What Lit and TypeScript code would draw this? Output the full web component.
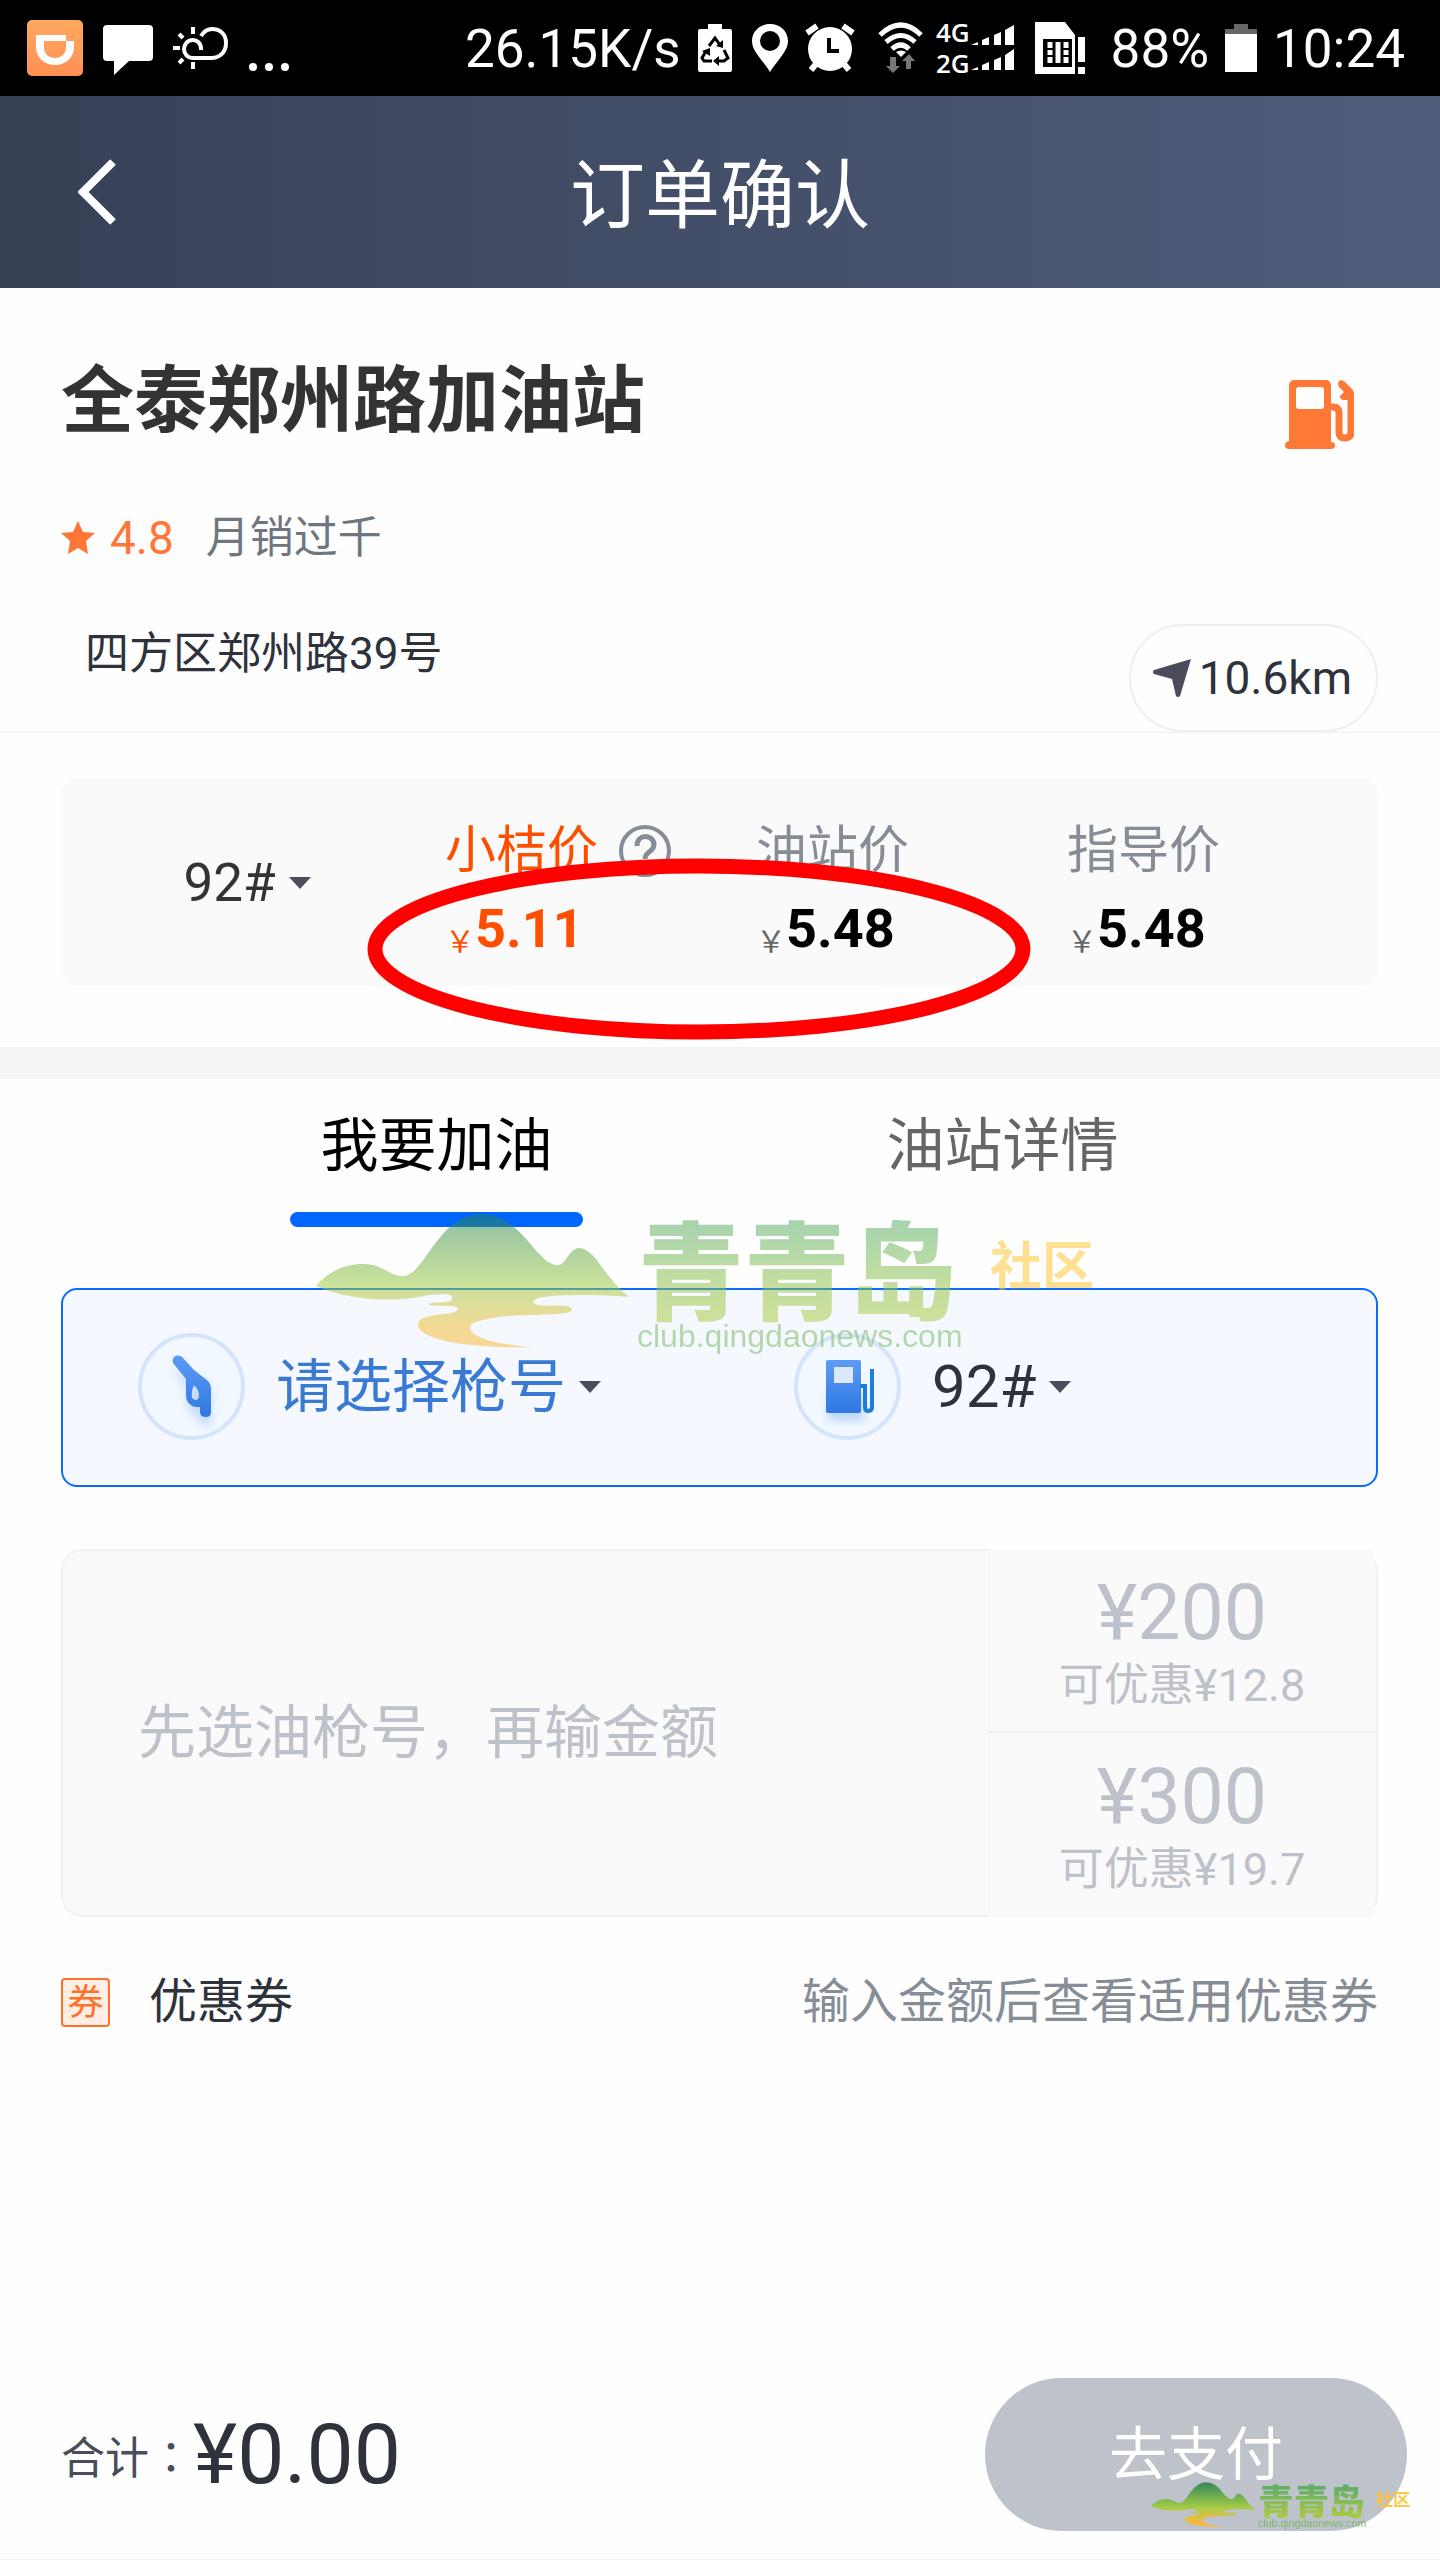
import { LitElement, html, css } from "lit";
import { customElement, property, state } from "lit/decorators.js";
import { classMap } from "lit/directives/class-map.js";

const textFonts = css`Roboto, "Noto Sans CJK SC", sans-serif`;

@customElement("status-bar")
class StatusBar extends LitElement {
  static styles = css`
    :host {
      display: flex;
      justify-content: space-between;
      align-items: center;
      height: 96px;
      padding: 0 35px 0 27px;
      background: #000;
      color: #fff;
      font: 400 53px/64px ${textFonts};
    }
    .group {
      display: flex;
      align-items: center;
      gap: 16px;
      white-space: nowrap;
    }
    .notices {
      gap: 20px;
    }
    span {
      padding-top: 2px;
    }
    svg {
      display: block;
      flex: none;
      overflow: visible;
    }
  `;

  render() {
    return html`
      <div class="group notices">
        <svg width="56" height="56" viewBox="0 0 56 56" aria-hidden="true">
          <defs>
            <linearGradient id="app" x1="0" y1="0" x2="0" y2="1">
              <stop offset="0" stop-color="#ffa95f" />
              <stop offset="1" stop-color="#ff8f54" />
            </linearGradient>
          </defs>
          <rect width="56" height="56" rx="5" fill="url(#app)" />
          <path
            fill="#fff"
            fill-rule="evenodd"
            d="M9 15H39V21H47V27C47 38 38 45 28 45S9 38 9 27ZM17 21V27C17 34 22 38 28 38S39 34 39 27V21Z"
          />
        </svg>
        <svg width="50" height="56" viewBox="0 0 50 56" aria-hidden="true">
          <path fill="#fff" d="M4 5H46Q50 5 50 9V37Q50 41 46 41H26L11 55V41H4Q0 41 0 37V9Q0 5 4 5Z" />
        </svg>
        <svg width="56" height="56" viewBox="0 0 56 56" fill="none" stroke="#fff" stroke-width="4" aria-hidden="true">
          <path d="M28 30V29C28 23 24 20 20 20C14 20 11 25 11 29C11 34 15 38 19 38H38C47 38 53 32 53 23C53 14 47 9 39 9C34 9 31 11 28 16" />
          <path d="M20 7V14M20 42V49M0 28H7M6 14L10 18M6 43L10 39" />
        </svg>
        <svg width="42" height="56" viewBox="0 0 42 56" fill="#fff" aria-hidden="true">
          <circle cx="4" cy="47" r="4" /><circle cx="20" cy="47" r="4" /><circle cx="36" cy="47" r="4" />
        </svg>
      </div>
      <div class="group">
        <span>26.15K/s</span>
        <svg width="36" height="48" viewBox="0 0 36 48" aria-hidden="true">
          <path fill="#fff" d="M11 0H25V5H33Q35 5 35 7V46Q35 48 33 48H3Q1 48 1 46V7Q1 5 3 5H11Z" />
          <g fill="none" stroke="#000" stroke-width="3">
            <path d="M12 22L18 14L23 21" /><path d="M27 26L31 34L27 37H20" /><path d="M15 37H7L5 34L9 27" />
          </g>
          <path d="M26 16V24L19 22ZM22 32V42L16 37ZM5 27L13 24V32Z" />
        </svg>
        <svg width="40" height="48" viewBox="0 0 40 48" aria-hidden="true">
          <path
            fill="#fff"
            fill-rule="evenodd"
            d="M21 0C31 0 39 7 39 17C39 27 30 34 21 48C12 34 3 27 3 17C3 7 11 0 21 0ZM21 7A10 10 0 1 0 21 27A10 10 0 1 0 21 7Z"
          />
        </svg>
        <svg width="50" height="48" viewBox="0 0 50 48" aria-hidden="true">
          <circle cx="25" cy="25" r="22" fill="#fff" />
          <path stroke="#fff" stroke-width="6" d="M2 9L12 2M38 2L48 9M11 40L6 46M39 40L44 46" />
          <path fill="none" stroke="#000" stroke-width="4" d="M24 14V27H34" />
        </svg>
        <svg width="50" height="50" viewBox="0 0 50 50" aria-hidden="true">
          <g fill="none" stroke="#fff" stroke-width="5">
            <path d="M9 12Q30 -8 50 12" /><path d="M15 19Q30 6 44 19" /><path d="M21 26Q30 18 38 26" />
          </g>
          <path fill="#fff" d="M25 29Q30 26 35 29L30 34Z" />
          <path fill="#777" d="M19 34H25V43H29L22 50L15 43H19ZM35 46V38H31L38 31L44 38H40V46Z" />
        </svg>
        <svg width="80" height="52" viewBox="0 0 80 52" fill="#fff" aria-hidden="true">
          <g font-family="Open Sans" font-size="26" font-weight="600">
            <text x="-1" y="20">4G</text>
            <text x="-1" y="51">2G</text>
          </g>
          <path d="M34 23L41 20V23ZM45 23V18L52 15V23ZM57 23V13L64 10V23ZM68 23V8L77 3V23Z" />
          <path d="M34 48L41 45V48ZM45 48V43L52 40V48ZM57 48V38L64 35V48ZM68 48V33L77 27V48Z" />
        </svg>
        <svg width="62" height="52" viewBox="0 0 62 52" aria-hidden="true">
          <path fill="#fff" fill-rule="evenodd" d="M2 0H32L42 13V52H2ZM10 17V45H39V17Z" />
          <path fill="none" stroke="#fff" stroke-width="5" d="M17 20V41M25 20V41M33 20V41" />
          <path stroke="#000" stroke-width="2" d="M13 27H21M13 34H21M29 27H36M29 34H36" />
          <path fill="#fff" d="M45 15H52V40H45ZM45 45H52V52H45Z" />
        </svg>
        <span>88%</span>
        <svg width="32" height="48" viewBox="0 0 32 48" aria-hidden="true">
          <path fill="#666" d="M9 0H23V5H32V10H0V5H9Z" />
          <path fill="#fff" d="M0 10H32V48H0Z" />
        </svg>
        <span>10:24</span>
      </div>
    `;
  }
}

@customElement("community-mark")
class CommunityMark extends LitElement {
  static styles = css`
    :host {
      display: block;
      pointer-events: none;
    }
    svg {
      display: block;
      width: 100%;
      overflow: visible;
    }
    .name {
      font: 900 106px "Noto Sans CJK SC", sans-serif;
    }
    .suffix {
      font: 700 52px "Noto Sans CJK SC", sans-serif;
    }
    .site {
      font: 400 32px "Liberation Sans", sans-serif;
    }
  `;

  render() {
    return html`
      <svg viewBox="0 0 780 142" role="img" aria-label="青青岛社区">
        <defs>
          <linearGradient id="hill" x1="0" y1="0" x2="0" y2="1">
            <stop offset="0" stop-color="#23824f" />
            <stop offset="0.55" stop-color="#9dcb38" />
            <stop offset="0.68" stop-color="#c6c63a" />
            <stop offset="0.85" stop-color="#f3bb2c" />
            <stop offset="1" stop-color="#f8ba30" />
          </linearGradient>
          <linearGradient id="ink" x1="0" y1="0" x2="0" y2="1">
            <stop offset="0.2" stop-color="#4fa962" />
            <stop offset="0.8" stop-color="#a2ca38" />
          </linearGradient>
        </defs>
        <path
          fill="url(#hill)"
          d="M0 73C12 58 30 51 47 51C68 51 74 64 88 63C110 60 122 2 165 1C206 2 218 48 240 52C250 54 252 36 263 35C280 36 286 62 313 84C276 81 242 82 228 84C215 86 215 90 222 92C234 94 256 90 256 97C254 104 200 100 177 105C160 108 154 110 154 115C156 126 186 132 217 134C150 136 104 126 102 113C100 98 142 104 142 96C142 90 113 95 113 91C116 88 136 91 136 86C136 82 136 80 113 82C80 90 34 88 0 73Z"
        />
        <text class="name" x="322" y="98" fill="url(#ink)">青青岛</text>
        <text class="suffix" x="674" y="72" fill="#ffc32b">社区</text>
        <text class="site" x="321" y="134" fill="#73b85a">club.qingdaonews.com</text>
      </svg>
    `;
  }
}

interface Price {
  label: string;
  value: string;
  own?: boolean;
}

interface Preset {
  amount: string;
  saving: string;
}

@customElement("drop-down")
class DropDown extends LitElement {
  @property() label = "";
  @property() value = "";

  static styles = css`
    :host {
      display: inline-flex;
    }
    .field {
      display: flex;
      align-items: center;
      gap: 12px;
    }
    select {
      appearance: none;
      border: 0;
      margin: 0;
      padding: 0;
      background: none;
      color: inherit;
      font: inherit;
    }
    svg {
      display: block;
    }
  `;

  render() {
    return html`
      <label class="field">
        <select aria-label=${this.label}>
          <option>${this.value}</option>
        </select>
        <svg width="22" height="12" viewBox="0 0 22 12" aria-hidden="true">
          <path fill="#4c4d5c" d="M0 0H22L11 12Z" />
        </svg>
      </label>
    `;
  }
}

@customElement("app-root")
class AppRoot extends LitElement {
  @state() private tab = 0;

  private tabs = ["我要加油", "油站详情"];
  private prices: Price[] = [
    { label: "小桔价", value: "5.11", own: true },
    { label: "油站价", value: "5.48" },
    { label: "指导价", value: "5.48" },
  ];
  private presets: Preset[] = [
    { amount: "¥200", saving: "可优惠¥12.8" },
    { amount: "¥300", saving: "可优惠¥19.7" },
  ];

  static styles = css`
    :host {
      display: flex;
      flex-direction: column;
      min-height: 100vh;
      background: #fefefe;
      color: #2e323b;
      font: 400 44px/60px ${textFonts};
    }
    * {
      box-sizing: border-box;
    }
    button {
      border: 0;
      margin: 0;
      padding: 0;
      background: none;
      color: inherit;
      font: inherit;
    }
    h1,
    h2,
    p {
      margin: 0;
    }
    svg {
      display: block;
      flex: none;
    }
    .header {
      display: grid;
      grid-template-columns: 120px 1fr 120px;
      align-items: center;
      height: 192px;
      background: linear-gradient(90deg, #384056, #4f5d7b);
      color: #fff;
    }
    .back {
      display: flex;
      justify-content: flex-end;
    }
    .title {
      padding-top: 8px;
      text-align: center;
      font: 400 75px/96px ${textFonts};
    }
    .station {
      padding: 64px 62px 0 61px;
      border-bottom: 1px solid #f1f1f3;
    }
    .station-head {
      display: flex;
      justify-content: space-between;
      height: 97px;
      padding-right: 24px;
    }
    .station-name {
      font: 700 73px/98px ${textFonts};
      color: #333;
    }
    .station-icon {
      align-self: flex-end;
    }
    .rating {
      display: flex;
      align-items: center;
      margin-top: 56px;
      line-height: 66px;
      color: #6f7680;
    }
    .score {
      margin: 0 32px 0 15px;
      font-size: 46px;
      color: #ff7637;
    }
    .place {
      display: flex;
      justify-content: space-between;
      margin-top: 53px;
      padding-left: 24px;
    }
    .distance {
      display: flex;
      align-items: center;
      gap: 8px;
      height: 108px;
      padding: 0 24px 0 22px;
      border: 2px solid #eeeef3;
      border-radius: 54px;
      font-size: 46px;
    }
    .pricing {
      padding: 46px 62px 61px 61px;
      border-bottom: 32px solid #f5f5f5;
    }
    .price-card {
      position: relative;
      display: grid;
      grid-template-columns: 384px repeat(3, 1fr);
      align-items: center;
      padding: 30px 0;
      border-radius: 16px;
      background: #fafafa;
    }
    .grade {
      justify-self: center;
      padding-right: 12px;
      font: 400 53px/64px ${textFonts};
      color: #333;
    }
    .price {
      padding-top: 11px;
    }
    .price-label {
      display: flex;
      align-items: center;
      gap: 20px;
      font-size: 51px;
      line-height: 62px;
      color: #868d97;
    }
    .price-value {
      display: flex;
      align-items: flex-end;
      height: 74px;
      color: #000;
      font: 700 54px/54px ${textFonts};
    }
    .currency {
      font: 400 30px/34px "Noto Sans CJK SC", sans-serif;
      color: #666;
    }
    .own,
    .own .currency {
      color: #ff4e00;
    }
    .circled {
      position: absolute;
      left: 306px;
      top: 79px;
    }
    .order {
      position: relative;
      padding: 0 62px 0 61px;
    }
    .tabs {
      display: flex;
      justify-content: center;
    }
    .tab {
      display: flex;
      flex-direction: column;
      align-items: center;
      gap: 34px;
      width: 566px;
      padding-top: 35px;
      font: 400 58px/64px ${textFonts};
      color: #666;
    }
    .tab::after {
      content: "";
      width: 293px;
      height: 15px;
      border-radius: 8px;
    }
    .tab.active {
      color: #000;
    }
    .tab.active::after {
      background: #0066ff;
    }
    .watermark {
      position: absolute;
      left: 316px;
      top: 134px;
      width: 780px;
      opacity: 0.5;
    }
    .pump-card {
      display: grid;
      grid-template-columns: 656px 1fr;
      align-items: center;
      height: 199px;
      margin-top: 61px;
      padding: 0 75px 2px;
      border: 2px solid #0a6cff;
      border-radius: 16px;
      background: #f5f8ff;
      font-size: 60px;
      line-height: 64px;
    }
    .pick {
      display: flex;
      align-items: center;
      gap: 31px;
    }
    .gun {
      color: #3a7ad2;
      font-size: 58px;
    }
    .amount-card {
      display: grid;
      grid-template-columns: 1fr 385px;
      margin-top: 62px;
      padding-right: 2px;
      border: 2px solid #f0f0f5;
      border-radius: 22px;
      background: #fafafa;
      color: #bdc1ca;
    }
    .amount {
      width: 100%;
      border: 0;
      padding: 0 0 0 75px;
      background: none;
      font: 400 58px/64px ${textFonts};
    }
    .amount::placeholder {
      color: #bdc1ca;
      opacity: 1;
    }
    .presets {
      display: grid;
      margin: -2px 0;
      border-left: 1px solid #f0f0f5;
      background: #fafafa;
    }
    .preset {
      display: flex;
      flex-direction: column;
      align-items: center;
      height: 184px;
      padding-top: 24px;
      font-size: 45px;
      line-height: 66px;
    }
    .preset:first-child {
      border-bottom: 2px solid #f0f0f5;
    }
    .preset-amount {
      font-size: 77px;
      line-height: 80px;
    }
    .coupon {
      display: flex;
      align-items: center;
      margin-top: 53px;
      font-size: 48px;
      line-height: 64px;
    }
    .coupon-badge {
      width: 49px;
      height: 49px;
      margin-right: 39px;
      border: 2px solid #ff7128;
      border-radius: 4px;
      background: #ffeee6;
      color: #ff7128;
      font-size: 36px;
      line-height: 47px;
      text-align: center;
    }
    .coupon-hint {
      margin-left: auto;
      color: #868d97;
    }
    .footer {
      position: relative;
      display: flex;
      align-items: center;
      margin-top: auto;
      padding: 0 33px 28px 61px;
      border-bottom: 1px solid #f1f1f3;
    }
    .total-label {
      color: #484e5b;
      font-family: "Noto Sans CJK TC", sans-serif;
    }
    .total {
      font-size: 84px;
      line-height: 96px;
    }
    .pay {
      width: 422px;
      height: 153px;
      margin-left: auto;
      border-radius: 77px;
      background: #bec2cb;
      color: #fff;
      font-size: 58px;
    }
    .stamp {
      position: absolute;
      right: 29px;
      bottom: 30px;
      width: 260px;
      opacity: 0.9;
    }
  `;

  private gunIcon() {
    return html`<svg width="107" height="107" viewBox="0 0 107 107" aria-hidden="true">
      <defs>
        <linearGradient id="gun" x1="0" y1="0" x2="0" y2="1">
          <stop offset="0" stop-color="#5d9cf4" />
          <stop offset="1" stop-color="#2f77e2" />
        </linearGradient>
        <filter id="soft" x="-50%" y="-50%" width="200%" height="200%"><feGaussianBlur stdDeviation="4" /></filter>
      </defs>
      <circle cx="53.5" cy="53.5" r="51.5" fill="#f1f8ff" stroke="#d4e5fb" stroke-width="4" />
      <path fill="#a9c9f5" opacity="0.6" filter="url(#soft)" d="M36 34L48 56L50 76L68 94L74 90L72 52Z" />
      <path
        fill="url(#gun)"
        fill-rule="evenodd"
        d="M35 30C33 22 42 20 46 26L56 37L70 48Q73 51 73 55V79Q73 84 68 84Q62 84 62 79V74H58Q48 72 48 62V46ZM56 52Q53 58 54 65L57 67Q61 67 61 62Q61 57 56 52Z"
      />
    </svg>`;
  }

  private pumpIcon() {
    return html`<svg width="107" height="107" viewBox="0 0 107 107" aria-hidden="true">
      <defs>
        <linearGradient id="pump" x1="0" y1="0" x2="0" y2="1">
          <stop offset="0" stop-color="#5d9cf4" />
          <stop offset="1" stop-color="#2f77e2" />
        </linearGradient>
        <filter id="haze" x="-50%" y="-50%" width="200%" height="200%"><feGaussianBlur stdDeviation="4" /></filter>
      </defs>
      <circle cx="53.5" cy="53.5" r="51.5" fill="#f1f8ff" stroke="#d4e5fb" stroke-width="4" />
      <rect x="34" y="60" width="36" height="28" fill="#a9c9f5" opacity="0.7" filter="url(#haze)" />
      <rect x="32" y="27" width="35" height="53" rx="2" fill="url(#pump)" />
      <rect x="40" y="34" width="19" height="16" fill="#dbe8fb" />
      <path fill="none" stroke="#1c80da" stroke-width="4" d="M66 53H71V74Q71 78 74 78Q78 78 78 74V36" />
    </svg>`;
  }

  render() {
    return html`
      <status-bar></status-bar>
      <header class="header">
        <button class="back" aria-label="返回">
          <svg width="42" height="68" viewBox="0 0 42 68" fill="none" stroke="#fff" stroke-width="8">
            <path d="M35 4L5 34L35 64" />
          </svg>
        </button>
        <h1 class="title">订单确认</h1>
      </header>

      <section class="station">
        <div class="station-head">
          <h2 class="station-name">全泰郑州路加油站</h2>
          <svg class="station-icon" width="69" height="69" viewBox="0 0 69 69" aria-hidden="true">
            <path
              fill="#ff7835"
              fill-rule="evenodd"
              d="M9 0H41Q45 0 46 5V62Q50 62 50 65Q50 69 46 69H4Q0 69 0 65Q0 62 4 61V5Q5 0 9 0ZM14 7Q11 7 11 10V26Q11 29 14 29H36Q39 29 39 26V10Q39 7 36 7Z"
            />
            <path fill="none" stroke="#ff7835" stroke-width="7" d="M44 27H48Q54 27 54 33V52Q54 58 60 58Q66 58 66 52V14" />
            <path fill="#ff7835" d="M53 4C53 0 57 -1 60 2L67 9Q69 11 69 14V20H58Q55 19 55 16L59 12L54 7Z" />
          </svg>
        </div>
        <div class="rating">
          <svg width="34" height="34" viewBox="0 0 34 34" aria-hidden="true">
            <path fill="#ff7637" d="M17 0L22 11L34 12L25 20L27 33L17 27L7 33L9 20L0 12L12 11Z" />
          </svg>
          <span class="score">4.8</span>
          <span>月销过千</span>
        </div>
        <div class="place">
          <p>四方区郑州路39号</p>
          <button class="distance">
            <svg width="38" height="38" viewBox="0 0 38 38" aria-hidden="true">
              <path fill="#4a4b5b" d="M38 0L27 37Q25 39 23 37L19 20L1 15Q-1 13 1 11Z" />
            </svg>
            10.6km
          </button>
        </div>
      </section>

      <section class="pricing">
        <div class="price-card">
          <drop-down class="grade" label="油号" value="92#"></drop-down>
          ${this.prices.map(
            (p) => html`
              <div class="price">
                <div class=${classMap({ "price-label": true, own: !!p.own })}>
                  ${p.label}
                  ${p.own
                    ? html`<svg width="54" height="54" viewBox="0 0 54 54" fill="none" stroke="#868d97" stroke-width="4" aria-hidden="true">
                        <circle cx="27" cy="27" r="24" />
                        <path stroke-width="5" d="M19 22C19 9 36 10 36 21C36 28 27 27 27 35" />
                        <circle cx="27" cy="41" r="3" fill="#868d97" stroke="none" />
                      </svg>`
                    : ""}
                </div>
                <div class=${classMap({ "price-value": true, own: !!p.own })}>
                  <span class="currency">￥</span>${p.value}
                </div>
              </div>
            `
          )}
          <svg class="circled" width="664" height="182" viewBox="0 0 664 182" aria-hidden="true">
            <ellipse cx="332" cy="91" rx="324" ry="83" fill="none" stroke="#f00" stroke-width="15" />
          </svg>
        </div>
      </section>

      <main class="order">
        <div class="tabs" role="tablist">
          ${this.tabs.map(
            (name, i) => html`
              <button
                role="tab"
                aria-selected=${i === this.tab ? "true" : "false"}
                class=${classMap({ tab: true, active: i === this.tab })}
                @click=${() => (this.tab = i)}
              >${name}</button>
            `
          )}
        </div>
        <div class="pump-card">
          <div class="pick gun">
            ${this.gunIcon()}
            <drop-down label="枪号" value="请选择枪号"></drop-down>
          </div>
          <div class="pick">
            ${this.pumpIcon()}
            <drop-down label="油号" value="92#"></drop-down>
          </div>
        </div>
        <div class="amount-card">
          <input class="amount" aria-label="金额" placeholder="先选油枪号，再输金额" />
          <div class="presets">
            ${this.presets.map(
              (p) => html`
                <button class="preset">
                  <span class="preset-amount">${p.amount}</span>
                  <span>${p.saving}</span>
                </button>
              `
            )}
          </div>
        </div>
        <div class="coupon">
          <span class="coupon-badge">券</span>
          <span>优惠券</span>
          <span class="coupon-hint">输入金额后查看适用优惠券</span>
        </div>
        <community-mark class="watermark"></community-mark>
      </main>

      <footer class="footer">
        <span class="total-label">合计：</span>
        <span class="total">¥0.00</span>
        <button class="pay">去支付</button>
        <community-mark class="stamp"></community-mark>
      </footer>
    `;
  }
}
